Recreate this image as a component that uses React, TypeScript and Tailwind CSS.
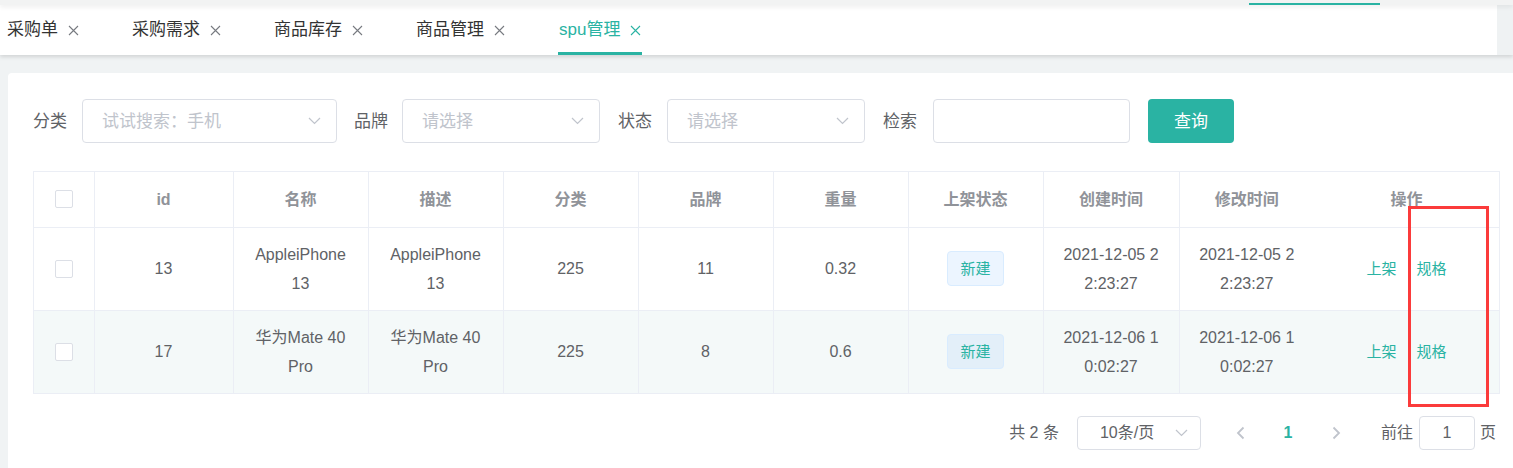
import React from 'react';

const teal = 'text-[#2ab3a3]';

function CloseX() {
  return (
    <svg width="11" height="11" viewBox="0 0 11 11" className="shrink-0">
      <path d="M1 1L10 10M10 1L1 10" stroke="currentColor" strokeWidth="1.1" fill="none" />
    </svg>
  );
}

function ChevronDown({ w = 13 }: { w?: number }) {
  return (
    <svg width={w} height="8" viewBox="0 0 13 8" className="shrink-0">
      <polyline points="1,1 6.5,6.5 12,1" stroke="#c0c4cc" strokeWidth="1.2" fill="none" />
    </svg>
  );
}

function Arrow({ dir }: { dir: 'left' | 'right' }) {
  return (
    <svg width="9" height="14" viewBox="0 0 9 14">
      <polyline
        points={dir === 'left' ? '7.5,1.5 2,7 7.5,12.5' : '1.5,1.5 7,7 1.5,12.5'}
        stroke="#c0c4cc"
        strokeWidth="1.8"
        fill="none"
      />
    </svg>
  );
}

function Checkbox() {
  return <div className="mx-auto w-[18px] h-[18px] border border-[#dcdfe6] rounded-[2px] bg-white" />;
}

const tabs = ['采购单', '采购需求', '商品库存', '商品管理', 'spu管理'];

const rows = [
  {
    id: 13,
    name: 'AppleiPhone 13',
    desc: 'AppleiPhone 13',
    cat: '225',
    brand: '11',
    weight: '0.32',
    created: '2021-12-05 22:23:27',
    updated: '2021-12-05 22:23:27',
  },
  {
    id: 17,
    name: '华为Mate 40 Pro',
    desc: '华为Mate 40 Pro',
    cat: '225',
    brand: '8',
    weight: '0.6',
    created: '2021-12-06 10:02:27',
    updated: '2021-12-06 10:02:27',
  },
];

export default function App() {
  const cell = 'border-b border-r border-[#ebeef5] px-[17px] text-center break-all';

  return (
    <div className="relative w-[1513px] h-[468px] overflow-hidden bg-[#f0f3f4] font-['Liberation_Sans','Noto_Sans_CJK_SC',sans-serif]">
      {/* top strip */}
      <div className="relative z-10 h-[5px] bg-[#f2f3f3] shadow-[0_2px_5px_rgba(0,0,0,0.07)]">
        <div className="ml-[1249px] pt-[3px]">
          <div className="w-[131px] h-[2px] bg-[#2ab3a3]" />
        </div>
      </div>

      {/* tabs */}
      <div className="flex h-[50px] bg-white shadow-[0_2px_4px_rgba(0,0,0,0.13)]">
        <div className="flex flex-1 gap-[53px] pl-[7px]">
          {tabs.map((t, i) => {
            const active = i === tabs.length - 1;
            return (
              <div
                key={t}
                className={`flex items-center gap-[10px] h-full border-b-[3px] pt-[3px] text-[17px] ${
                  active ? `border-[#2ab3a3] ${teal} px-[1px]` : 'border-transparent text-[#333333]'
                }`}
              >
                <span>{t}</span>
                <span className={active ? teal : 'text-[#777a80]'}>
                  <CloseX />
                </span>
              </div>
            );
          })}
        </div>
        <div className="w-[16px] bg-[#eff2f3]" />
      </div>

      {/* card */}
      <div className="mt-[18px] ml-[8px] bg-white rounded-tl-[4px] pt-[26px] pl-[25px] pr-[13px] h-[400px]">
        {/* filters */}
        <div className="flex items-center h-[44px] text-[17px] text-[#606266]">
          <span className="mr-[15px] pt-[1px]">分类</span>
          <div className="flex items-center justify-between w-[255px] h-[44px] border border-[#dcdfe6] rounded-[4px] pl-[19px] pr-[15px] text-[#c0c4cc]">
            <span className="pt-[1px]">试试搜索：手机</span>
            <ChevronDown />
          </div>
          <span className="ml-[17px] mr-[14px] pt-[1px]">品牌</span>
          <div className="flex items-center justify-between w-[198px] h-[44px] border border-[#dcdfe6] rounded-[4px] pl-[19px] pr-[15px] text-[#c0c4cc]">
            <span className="pt-[1px]">请选择</span>
            <ChevronDown />
          </div>
          <span className="ml-[18px] mr-[15px] pt-[1px]">状态</span>
          <div className="flex items-center justify-between w-[198px] h-[44px] border border-[#dcdfe6] rounded-[4px] pl-[19px] pr-[15px] text-[#c0c4cc]">
            <span className="pt-[1px]">请选择</span>
            <ChevronDown />
          </div>
          <span className="ml-[18px] mr-[16px] pt-[1px]">检索</span>
          <div className="w-[197px] h-[44px] border border-[#dcdfe6] rounded-[4px]" />
          <button className="ml-[18px] w-[86px] h-[44px] bg-[#2ab3a3] text-white rounded-[4px] text-[17px] pt-[1px]">
            查询
          </button>
        </div>

        {/* table */}
        <div className="mt-[28px] border-l border-t border-r border-[#ebeef5]">
          <table className="w-full table-fixed text-[16px] leading-[29px] text-[#606266]">
            <colgroup>
              <col className="w-[60px]" />
              <col className="w-[139px]" />
              <col className="w-[135px]" />
              <col className="w-[135px]" />
              <col className="w-[135px]" />
              <col className="w-[135px]" />
              <col className="w-[135px]" />
              <col className="w-[135px]" />
              <col className="w-[136px]" />
              <col className="w-[135px]" />
              <col />
            </colgroup>
            <thead>
              <tr className="h-[55px] text-[#909399] font-bold">
                <th className={cell}>
                  <Checkbox />
                </th>
                <th className={cell}>id</th>
                <th className={cell}>名称</th>
                <th className={cell}>描述</th>
                <th className={cell}>分类</th>
                <th className={cell}>品牌</th>
                <th className={cell}>重量</th>
                <th className={cell}>上架状态</th>
                <th className={cell}>创建时间</th>
                <th className="border-b border-[#ebeef5] px-[17px] text-center">修改时间</th>
                <th className="border-b border-[#ebeef5] px-[17px] text-center">操作</th>
              </tr>
            </thead>
            <tbody>
              {rows.map((r, i) => (
                <tr key={r.id} className={`h-[83px] ${i === 1 ? 'bg-[#f4f9f9]' : 'bg-white'}`}>
                  <td className={cell}>
                    <Checkbox />
                  </td>
                  <td className={cell}>{r.id}</td>
                  <td className={cell}>{r.name}</td>
                  <td className={cell}>{r.desc}</td>
                  <td className={cell}>{r.cat}</td>
                  <td className={cell}>{r.brand}</td>
                  <td className={cell}>{r.weight}</td>
                  <td className={cell}>
                    <span
                      className={`inline-flex items-center justify-center w-[57px] h-[35px] rounded-[4px] border border-[#d9ecff] text-[15px] ${teal} ${
                        i === 1 ? 'bg-[#e3eff9]' : 'bg-[#ecf5ff]'
                      }`}
                    >
                      新建
                    </span>
                  </td>
                  <td className={cell}>{r.created}</td>
                  <td className="border-b border-[#ebeef5] px-[17px] text-center break-all">{r.updated}</td>
                  <td className="border-b border-[#ebeef5] text-center">
                    <div className={`flex justify-center gap-[20px] text-[15px] ${teal}`}>
                      <span>上架</span>
                      <span>规格</span>
                    </div>
                  </td>
                </tr>
              ))}
            </tbody>
          </table>
        </div>

        {/* pagination */}
        <div className="mt-[22px] flex items-center justify-end pr-[4px] text-[16px] text-[#606266]">
          <span className="mr-[18px]">共 2 条</span>
          <div className="flex items-center justify-between w-[124px] h-[34px] border border-[#dcdfe6] rounded-[4px] pl-[22px] pr-[12px]">
            <span>10条/页</span>
            <ChevronDown w={13} />
          </div>
          <div className="ml-[20px] w-[40px] h-[34px] flex items-center justify-center">
            <Arrow dir="left" />
          </div>
          <div className={`ml-[7px] w-[40px] h-[34px] flex items-center justify-center font-bold ${teal}`}>1</div>
          <div className="ml-[9px] w-[40px] h-[34px] flex items-center justify-center">
            <Arrow dir="right" />
          </div>
          <span className="ml-[24px]">前往</span>
          <div className="ml-[6px] w-[56px] h-[34px] border border-[#dcdfe6] rounded-[4px] flex items-center justify-center">
            1
          </div>
          <span className="ml-[5px]">页</span>
        </div>
      </div>

      {/* annotation box */}
      <div className="absolute left-[1408px] top-[206px] w-[81px] h-[201px] border-[3px] border-[#fb3b3b]" />
    </div>
  );
}
